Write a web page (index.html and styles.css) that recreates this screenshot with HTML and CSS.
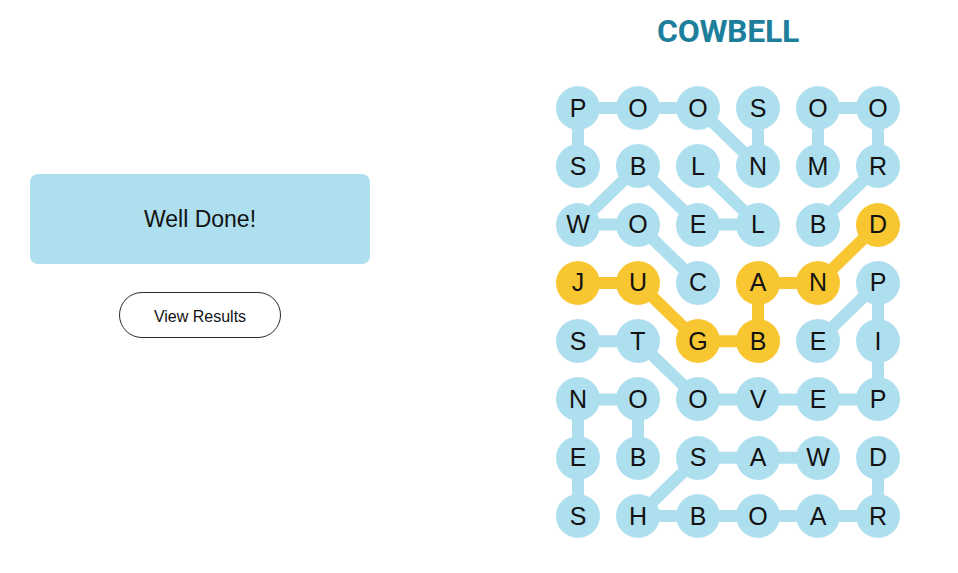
FILE: index.html
```html
<!DOCTYPE html>
<html lang="en">
<head>
<meta charset="utf-8">
<title>Strands - COWBELL</title>
<link rel="stylesheet" href="styles.css">
</head>
<body>
<div class="page">
  <section class="left">
    <div class="done-box">Well Done!</div>
    <button class="results-btn">View Results</button>
  </section>
  <section class="right">
    <h1 class="theme">COWBELL</h1>
    <div class="board">
      <svg class="links" width="344" height="452" viewBox="0 0 344 452">
        <g stroke="#aedfee" stroke-width="12" stroke-linecap="butt">
          <!-- SPOONS -->
          <line x1="22" y1="80.3" x2="22" y2="22"/>
          <line x1="22" y1="22" x2="82" y2="22"/>
          <line x1="82" y1="22" x2="142" y2="22"/>
          <line x1="142" y1="22" x2="202" y2="80.3"/>
          <line x1="202" y1="80.3" x2="202" y2="22"/>
          <!-- BROOM -->
          <line x1="262" y1="138.6" x2="322" y2="80.3"/>
          <line x1="322" y1="80.3" x2="322" y2="22"/>
          <line x1="322" y1="22" x2="262" y2="22"/>
          <line x1="262" y1="22" x2="262" y2="80.3"/>
          <!-- COWBELL -->
          <line x1="142" y1="196.9" x2="82" y2="138.6"/>
          <line x1="82" y1="138.6" x2="22" y2="138.6"/>
          <line x1="22" y1="138.6" x2="82" y2="80.3"/>
          <line x1="82" y1="80.3" x2="142" y2="138.6"/>
          <line x1="142" y1="138.6" x2="202" y2="138.6"/>
          <line x1="202" y1="138.6" x2="142" y2="80.3"/>
          <!-- STOVEPIPE -->
          <line x1="22" y1="255.2" x2="82" y2="255.2"/>
          <line x1="82" y1="255.2" x2="142" y2="313.5"/>
          <line x1="142" y1="313.5" x2="322" y2="313.5"/>
          <line x1="322" y1="313.5" x2="322" y2="196.9"/>
          <line x1="322" y1="196.9" x2="262" y2="255.2"/>
          <!-- BONES -->
          <line x1="82" y1="371.8" x2="82" y2="313.5"/>
          <line x1="82" y1="313.5" x2="22" y2="313.5"/>
          <line x1="22" y1="313.5" x2="22" y2="430.1"/>
          <!-- WASHBOARD -->
          <line x1="262" y1="371.8" x2="142" y2="371.8"/>
          <line x1="142" y1="371.8" x2="82" y2="430.1"/>
          <line x1="82" y1="430.1" x2="322" y2="430.1"/>
          <line x1="322" y1="430.1" x2="322" y2="371.8"/>
        </g>
        <g stroke="#f8c630" stroke-width="12" stroke-linecap="butt">
          <!-- JUGBAND -->
          <line x1="22" y1="196.9" x2="82" y2="196.9"/>
          <line x1="82" y1="196.9" x2="142" y2="255.2"/>
          <line x1="142" y1="255.2" x2="202" y2="255.2"/>
          <line x1="202" y1="255.2" x2="202" y2="196.9"/>
          <line x1="202" y1="196.9" x2="262" y2="196.9"/>
          <line x1="262" y1="196.9" x2="322" y2="138.6"/>
        </g>
      </svg>
      <div class="cell">P</div><div class="cell">O</div><div class="cell">O</div><div class="cell">S</div><div class="cell">O</div><div class="cell">O</div>
      <div class="cell">S</div><div class="cell">B</div><div class="cell">L</div><div class="cell">N</div><div class="cell">M</div><div class="cell">R</div>
      <div class="cell">W</div><div class="cell">O</div><div class="cell">E</div><div class="cell">L</div><div class="cell">B</div><div class="cell gold">D</div>
      <div class="cell gold">J</div><div class="cell gold">U</div><div class="cell">C</div><div class="cell gold">A</div><div class="cell gold">N</div><div class="cell">P</div>
      <div class="cell">S</div><div class="cell">T</div><div class="cell gold">G</div><div class="cell gold">B</div><div class="cell">E</div><div class="cell">I</div>
      <div class="cell">N</div><div class="cell">O</div><div class="cell">O</div><div class="cell">V</div><div class="cell">E</div><div class="cell">P</div>
      <div class="cell">E</div><div class="cell">B</div><div class="cell">S</div><div class="cell">A</div><div class="cell">W</div><div class="cell">D</div>
      <div class="cell">S</div><div class="cell">H</div><div class="cell">B</div><div class="cell">O</div><div class="cell">A</div><div class="cell">R</div>
    </div>
  </section>
</div>
</body>
</html>
```

FILE: styles.css
```css
html, body {
  margin: 0;
  padding: 0;
  background: #ffffff;
}

body {
  width: 958px;
  height: 573px;
  overflow: hidden;
  font-family: "Liberation Sans", Arial, sans-serif;
  color: #121212;
}

.page {
  display: flex;
  flex-direction: row;
}

.left {
  width: 400px;
  display: flex;
  flex-direction: column;
  align-items: center;
  padding-top: 174px;
}

.done-box {
  width: 340px;
  height: 90px;
  box-sizing: border-box;
  background: #aedfee;
  border-radius: 8px;
  display: flex;
  align-items: center;
  justify-content: center;
  padding-top: 1px;
  font-size: 23px;
  color: #121212;
}

.results-btn {
  margin-top: 28px;
  width: 162px;
  height: 46px;
  box-sizing: border-box;
  border: 1px solid #2a2a2a;
  border-radius: 23px;
  background: #ffffff;
  font-family: "Liberation Sans", Arial, sans-serif;
  font-size: 16px;
  color: #121212;
  padding: 4px 0 0 0;
}

.right {
  margin-left: 156px;
  width: 344px;
  display: flex;
  flex-direction: column;
  align-items: center;
}

.theme {
  margin: 13px 0 0 0;
  height: 36px;
  line-height: 36px;
  font-family: Roboto, "Liberation Sans", sans-serif;
  font-weight: 700;
  font-size: 32px;
  color: #1d7f9b;
  letter-spacing: -0.3px;
}

.board {
  position: relative;
  margin-top: 37px;
  display: grid;
  grid-template-columns: repeat(6, 44px);
  grid-auto-rows: 44px;
  column-gap: 16px;
  row-gap: 14.3px;
}

.links {
  position: absolute;
  left: 0;
  top: 0;
  z-index: 0;
}

.cell {
  position: relative;
  z-index: 1;
  width: 44px;
  height: 44px;
  border-radius: 50%;
  background: #aedfee;
  display: flex;
  align-items: center;
  justify-content: center;
  font-size: 25px;
  color: #121212;
}

.cell.gold {
  background: #f8c630;
}
```
